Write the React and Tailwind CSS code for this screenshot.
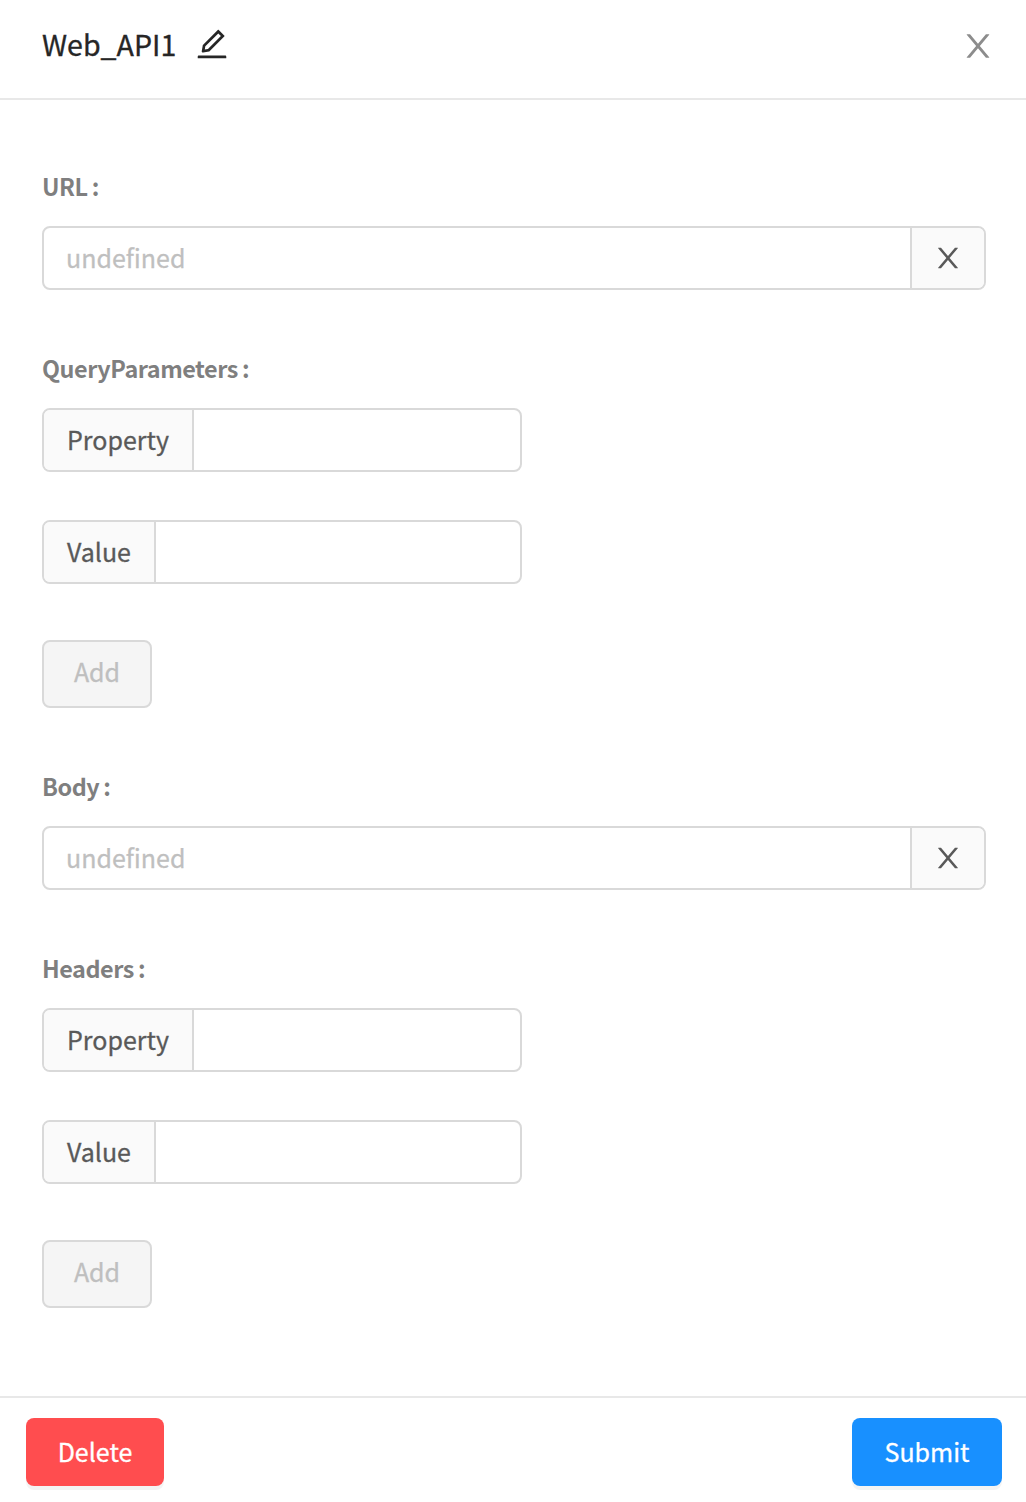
import React from "react";

const paths = {
  close:
    "M563.8 512l262.5-312.9c4.4-5.2.7-13.1-6.1-13.1h-79.8c-4.7 0-9.2 2.1-12.3 5.7L511.6 449.8 295.1 191.7c-3-3.6-7.5-5.7-12.3-5.7H203c-6.8 0-10.5 7.9-6.1 13.1L459.4 512 196.9 824.9A7.95 7.95 0 0 0 203 838h79.8c4.7 0 9.2-2.1 12.3-5.7l216.5-258.1 216.5 258.1c3 3.6 7.5 5.7 12.3 5.7h79.8c6.8 0 10.5-7.9 6.1-13.1L563.8 512z",
  edit:
    "M257.7 752c2 0 4-.2 6-.5L431.9 722c2-.4 3.9-1.3 5.3-2.8l423.9-423.9a9.96 9.96 0 0 0 0-14.1L694.9 114.9c-1.9-1.9-4.4-2.9-7.1-2.9s-5.2 1-7.1 2.9L256.8 538.8c-1.5 1.5-2.4 3.3-2.8 5.3l-29.5 168.2a33.5 33.5 0 0 0 9.4 29.8c6.6 6.4 14.9 9.9 23.8 9.9zm67.4-174.4L687.8 215l73.3 73.3-362.7 362.6-88.9 15.7 15.6-89zM880 836H144c-17.7 0-32 14.3-32 32v36c0 4.4 3.6 8 8 8h784c4.4 0 8-3.6 8-8v-36c0-17.7-14.3-32-32-32z",
};

function Icon({ name, className }) {
  return (
    <svg viewBox="64 64 896 896" fill="currentColor" className={className}>
      <path d={paths[name]} />
    </svg>
  );
}

function Label({ children }) {
  return (
    <div className="flex h-[78px] items-center pb-0.5 text-[23.4px] leading-[40px] font-bold tracking-[-0.45px] text-[#7f7f7f]">
      {children}
      <span className="ml-1">:</span>
    </div>
  );
}

function UrlInput() {
  return (
    <div className="flex h-16 w-[944px] overflow-hidden rounded-lg border-2 border-[#d9d9d9]">
      <input
        placeholder="undefined"
        className="min-w-0 flex-1 px-[22px] text-[25px] outline-none [-webkit-text-stroke:0.3px] placeholder:text-[#bfbfbf]"
      />
      <button className="flex w-[74px] items-center justify-center border-l-2 border-[#d9d9d9] bg-[#fafafa] text-[#595959]">
        <Icon name="close" className="size-7" />
      </button>
    </div>
  );
}

function AddonInput({ label }) {
  return (
    <div className="flex h-16 w-[480px] overflow-hidden rounded-lg border-2 border-[#d9d9d9]">
      <span className="flex items-center border-r-2 border-[#d9d9d9] bg-[#fafafa] px-[23px] pb-0.5 text-[25px] leading-none text-[#595959] [-webkit-text-stroke:0.3px]">
        {label}
      </span>
      <input className="min-w-0 flex-1 px-[22px] text-[25px] outline-none" />
    </div>
  );
}

function PairEditor() {
  return (
    <div className="flex flex-col items-start">
      <AddonInput label="Property" />
      <div className="h-12" />
      <AddonInput label="Value" />
      <button className="mt-14 h-[68px] w-[110px] rounded-lg border-2 border-[#d9d9d9] bg-[#f5f5f5] pb-1.5 text-[25px] leading-none text-[#bfbfbf] [-webkit-text-stroke:0.3px]">
        Add
      </button>
    </div>
  );
}

export default function App() {
  return (
    <div className="flex h-[1502px] w-[1026px] flex-col bg-white font-['Noto_Sans_CJK_SC',sans-serif]">
      <header className="flex h-[100px] items-start justify-between border-b-2 border-[#e8e8e8] pt-[22px] pr-8 pl-[42px]">
        <div className="flex items-center text-[#262626]">
          <h1 className="w-[134px] text-[28.6px] leading-[44px] [-webkit-text-stroke:0.3px]">Web_API1</h1>
          <Icon name="edit" className="ml-5 size-8" />
        </div>
        <Icon name="close" className="mt-2 size-8 text-[#8c8c8c]" />
      </header>
      <main className="flex-1 px-[42px] pt-12">
        <Label>URL</Label>
        <UrlInput />
        <div className="h-10" />
        <Label>QueryParameters</Label>
        <PairEditor />
        <div className="h-10" />
        <Label>Body</Label>
        <UrlInput />
        <div className="h-10" />
        <Label>Headers</Label>
        <PairEditor />
      </main>
      <footer className="flex h-[106px] justify-between border-t-2 border-[#e8e8e8] pt-5 pr-6 pl-[26px] text-[25px] leading-none text-white [-webkit-text-stroke:0.3px] [text-shadow:0_-2px_0_rgba(0,0,0,0.12)]">
        <button className="h-[68px] w-[138px] rounded-lg bg-[#ff4d4f] pb-0.5 shadow-[0_4px_0_rgba(0,0,0,0.045)]">Delete</button>
        <button className="h-[68px] w-[150px] rounded-lg bg-[#1890ff] pb-0.5 shadow-[0_4px_0_rgba(0,0,0,0.045)]">Submit</button>
      </footer>
    </div>
  );
}
